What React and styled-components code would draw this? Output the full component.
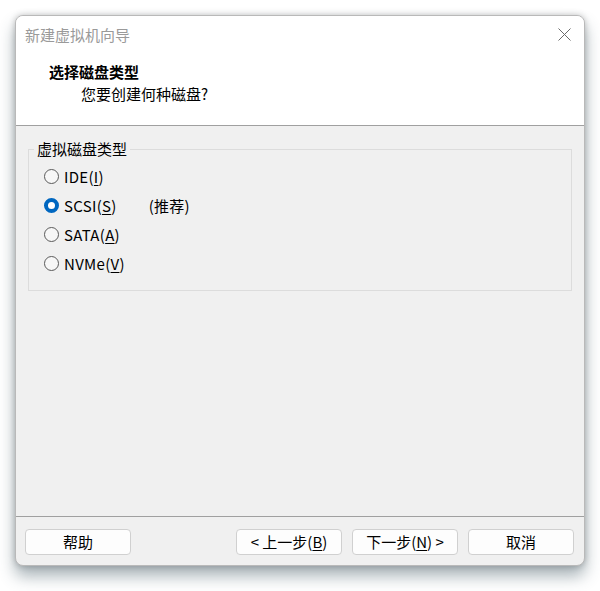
import React from 'react'
import styled, { createGlobalStyle } from 'styled-components'

const Global = createGlobalStyle`
  html, body {
    margin: 0;
    background: #fff;
  }
  body {
    font-family: "Noto Sans CJK SC", "Noto Sans", sans-serif;
    font-size: 15px;
    color: #000;
  }
`

const Stage = styled.div`
  padding: 15px 15px 0 15px;
  width: 600px;
  height: 591px;
  box-sizing: border-box;
`

const Window = styled.div`
  width: 570px;
  height: 551px;
  box-sizing: border-box;
  border: 1px solid #b9b9b9;
  border-radius: 8px;
  background: #f0f0f0;
  overflow: hidden;
  display: flex;
  flex-direction: column;
  box-shadow: 0 0 6px rgba(0, 0, 0, 0.22), 0 10px 16px rgba(60, 85, 95, 0.45);
`

const Header = styled.div`
  background: #fff;
  height: 109px;
  border-bottom: 1px solid #a0a0a0;
  flex-shrink: 0;
`

const TitleBar = styled.div`
  height: 37px;
  display: flex;
  align-items: center;
  justify-content: space-between;
  padding: 0 13px 0 9px;
  color: #9a9a9a;
`

const Close = styled.svg`
  width: 13px;
  height: 13px;
`

const Heading = styled.div`
  font-weight: bold;
  line-height: 22px;
  margin-top: 8px;
  padding-left: 33px;
`

const SubHeading = styled.div`
  line-height: 22px;
  padding-left: 65px;
`

const Body = styled.div`
  flex: 1;
`

const Group = styled.fieldset`
  margin: 13px 12px 0 12px;
  padding: 3px 0 12px 5px;
  border: 1px solid #dcdcdc;
  min-width: 0;
`

const Legend = styled.legend`
  padding: 0 3px;
  line-height: 20px;
`

const RadioList = styled.div`
  display: flex;
  flex-direction: column;
  padding-left: 10px;
`

const RadioRow = styled.label`
  display: flex;
  align-items: center;
  height: 29px;
  line-height: 29px;
  letter-spacing: 0.3px;
`

const Dot = styled.span`
  width: 15px;
  height: 15px;
  box-sizing: border-box;
  border-radius: 50%;
  margin-right: 5px;
  flex-shrink: 0;
  border: ${p => (p.$on ? '4.5px solid #0067c0' : '1px solid #5a5a5a')};
  background: ${p => (p.$on ? '#fff' : '#f7f7f7')};
`

const Hint = styled.span`
  margin-left: 32px;
`

const Footer = styled.div`
  border-top: 1px solid #a0a0a0;
  padding: 12px 10px 10px 9px;
  display: flex;
  gap: 10px;
`

const Button = styled.button`
  width: 106px;
  height: 26px;
  box-sizing: border-box;
  border: 1px solid #d0d0d0;
  border-radius: 4px;
  background: #fdfdfd;
  font: inherit;
  font-size: 15px;
  color: #000;
  padding: 0;
  line-height: 22px;
  margin-left: ${p => (p.$push ? 'auto' : '0')};
`

const U = styled.u`
  text-underline-offset: 2px;
`

const radios = [
  { label: 'IDE', key: 'I' },
  { label: 'SCSI', key: 'S', on: true, hint: '(推荐)' },
  { label: 'SATA', key: 'A' },
  { label: 'NVMe', key: 'V' },
]

const App = () => {
  return (
    <Stage>
      <Global />
      <Window>
        <Header>
          <TitleBar>
            <span>新建虚拟机向导</span>
            <Close viewBox="0 0 13 13">
              <path d="M0.5 0.5 L12.5 12.5 M12.5 0.5 L0.5 12.5" stroke="#6a6a6a" strokeWidth="1" fill="none" />
            </Close>
          </TitleBar>
          <Heading>选择磁盘类型</Heading>
          <SubHeading>您要创建何种磁盘?</SubHeading>
        </Header>
        <Body>
          <Group>
            <Legend>虚拟磁盘类型</Legend>
            <RadioList>
              {radios.map(r => (
                <RadioRow key={r.label}>
                  <Dot $on={r.on} />
                  {r.label}(<U>{r.key}</U>)
                  {r.hint && <Hint>{r.hint}</Hint>}
                </RadioRow>
              ))}
            </RadioList>
          </Group>
        </Body>
        <Footer>
          <Button>帮助</Button>
          <Button $push>&lt; 上一步(<U>B</U>)</Button>
          <Button>下一步(<U>N</U>) &gt;</Button>
          <Button>取消</Button>
        </Footer>
      </Window>
    </Stage>
  )
}

export default App
